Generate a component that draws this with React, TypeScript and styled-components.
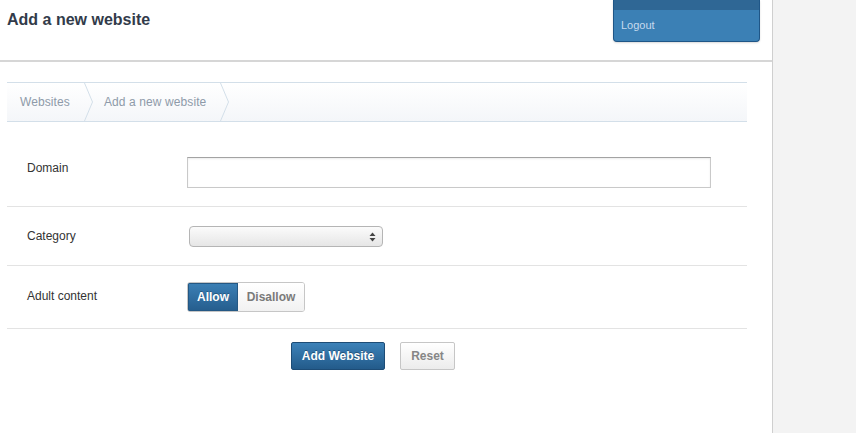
import React from "react";
import styled, { createGlobalStyle } from "styled-components";

const Global = createGlobalStyle`
  html, body { margin: 0; padding: 0; }
  body {
    background: #f3f3f3;
    font-family: "Liberation Sans", Arial, sans-serif;
    font-size: 12px;
    color: #333;
  }
`;

const Page = styled.div`
  width: 772px;
  min-height: 433px;
  background: #fff;
  border-right: 1px solid #cfcfcf;
  position: relative;
`;

const Header = styled.header`
  border-bottom: 2px solid #d6d6d6;
  padding: 10px 0 0 7px;
  box-sizing: border-box;
  height: 62px;
`;

const Title = styled.h1`
  margin: 0;
  font-size: 16px;
  font-weight: bold;
  color: #323b4a;
  line-height: 20px;
`;

const UserMenu = styled.div`
  position: absolute;
  left: 613px;
  top: 0;
  width: 145px;
  height: 41px;
  background: #3b80b5;
  border: 1px solid #1f5687;
  border-top: none;
  border-radius: 0 0 4px 4px;
  box-shadow: 0 1px 2px rgba(0, 0, 0, 0.15);
  display: flex;
  flex-direction: column;
  overflow: hidden;
`;

const MenuTop = styled.div`
  height: 10px;
  background: #2f6795;
`;

const MenuItem = styled.a`
  display: block;
  padding: 9px 0 0 7px;
  color: #c6daee;
  font-size: 11px;
  text-decoration: none;
`;

const Content = styled.div`
  padding: 20px 0 0 7px;
  width: 740px;
`;

const Breadcrumb = styled.nav`
  height: 38px;
  border-top: 1px solid #d3dfe9;
  border-bottom: 1px solid #d3dfe9;
  background: linear-gradient(to bottom, #ffffff, #f4f6f9);
  display: flex;
  align-items: stretch;
`;

const Crumb = styled.span<{ $first?: boolean }>`
  display: flex;
  align-items: center;
  padding: 0 14px 0 ${(p) => (p.$first ? 13 : 10)}px;
  color: #8e9aa9;
  font-size: 12px;
  letter-spacing: 0.1px;
`;

const Chevron = () => (
  <svg width="10" height="38" viewBox="0 0 10 38" style={{ display: "block" }}>
    <path d="M0.5 0 L8.5 19 L0.5 38" fill="none" stroke="#d3dfe9" strokeWidth="1" />
  </svg>
);

const Form = styled.form`
  margin-top: 15px;
`;

const Row = styled.div<{ $pt: number; $pb: number }>`
  display: flex;
  align-items: center;
  padding: ${(p) => p.$pt}px 0 ${(p) => p.$pb}px 0;
  border-bottom: 1px solid #e3e3e3;
`;

const Label = styled.label<{ $shift?: number }>`
  width: 180px;
  box-sizing: border-box;
  padding-left: 20px;
  font-size: 12px;
  color: #333;
  position: relative;
  top: ${(p) => p.$shift || 0}px;
`;

const TextInput = styled.input`
  width: 524px;
  height: 31px;
  box-sizing: border-box;
  border: 1px solid #c9c9c9;
  border-top-color: #a3a3a3;
  box-shadow: inset 0 1px 2px rgba(0, 0, 0, 0.08);
  padding: 4px 6px;
  font-family: inherit;
  font-size: 12px;
  outline: none;
`;

const SelectBox = styled.div`
  margin-left: 2px;
  width: 194px;
  height: 21px;
  box-sizing: border-box;
  border: 1px solid #b5b5b5;
  border-radius: 4px;
  background: linear-gradient(to bottom, #fbfbfb, #e6e6e6);
  display: flex;
  align-items: center;
  justify-content: flex-end;
  padding-right: 6px;
`;

const Arrows = () => (
  <svg width="7" height="10" viewBox="0 0 7 10">
    <path d="M3.5 0.5 L6.5 4 L0.5 4 Z" fill="#444" />
    <path d="M0.5 6 L6.5 6 L3.5 9.5 Z" fill="#444" />
  </svg>
);

const Toggle = styled.div`
  display: flex;
  border-radius: 3px;
  overflow: hidden;
  border: 1px solid #c6c6c6;
  height: 30px;
  box-sizing: border-box;
`;

const ToggleBtn = styled.button<{ $active?: boolean; $w: number }>`
  width: ${(p) => p.$w}px;
  border: none;
  margin: 0;
  padding: 0;
  font-family: inherit;
  font-weight: bold;
  font-size: 12px;
  color: ${(p) => (p.$active ? "#fff" : "#7a7a7a")};
  background: ${(p) =>
    p.$active
      ? "linear-gradient(to bottom, #3b80b6, #255d8d)"
      : "linear-gradient(to bottom, #ffffff, #f1f1f1)"};
  text-shadow: ${(p) => (p.$active ? "0 -1px 0 rgba(0,0,0,0.25)" : "none")};
  box-shadow: ${(p) => (p.$active ? "inset 0 0 0 1px #245884" : "none")};
`;

const Actions = styled.div`
  display: flex;
  gap: 15px;
  padding: 13px 0 0 284px;
`;

const Button = styled.button<{ $primary?: boolean; $w: number }>`
  width: ${(p) => p.$w}px;
  height: 28px;
  box-sizing: border-box;
  border-radius: 2px;
  font-family: inherit;
  font-weight: bold;
  font-size: 12px;
  border: 1px solid ${(p) => (p.$primary ? "#1d4c76" : "#c6c6c6")};
  color: ${(p) => (p.$primary ? "#fff" : "#868686")};
  background: ${(p) =>
    p.$primary
      ? "linear-gradient(to bottom, #3c82b9, #235b8a)"
      : "linear-gradient(to bottom, #ffffff, #ececec)"};
  text-shadow: ${(p) => (p.$primary ? "0 -1px 0 rgba(0,0,0,0.3)" : "none")};
  padding: 0;
`;

export default function App() {
  return (
    <>
      <Global />
      <Page>
        <Header>
          <Title>Add a new website</Title>
        </Header>
        <UserMenu>
          <MenuTop />
          <MenuItem>Logout</MenuItem>
        </UserMenu>
        <Content>
          <Breadcrumb>
            <Crumb $first>Websites</Crumb>
            <Chevron />
            <Crumb>Add a new website</Crumb>
            <Chevron />
          </Breadcrumb>
          <Form onSubmit={(e) => e.preventDefault()}>
            <Row $pt={20} $pb={18}>
              <Label $shift={-5}>Domain</Label>
              <TextInput type="text" />
            </Row>
            <Row $pt={19} $pb={18}>
              <Label $shift={-1}>Category</Label>
              <SelectBox>
                <Arrows />
              </SelectBox>
            </Row>
            <Row $pt={16} $pb={16}>
              <Label $shift={-1}>Adult content</Label>
              <Toggle>
                <ToggleBtn type="button" $active $w={50}>Allow</ToggleBtn>
                <ToggleBtn type="button" $w={66}>Disallow</ToggleBtn>
              </Toggle>
            </Row>
            <Actions>
              <Button type="submit" $primary $w={94}>Add Website</Button>
              <Button type="button" $w={55}>Reset</Button>
            </Actions>
          </Form>
        </Content>
      </Page>
    </>
  );
}
